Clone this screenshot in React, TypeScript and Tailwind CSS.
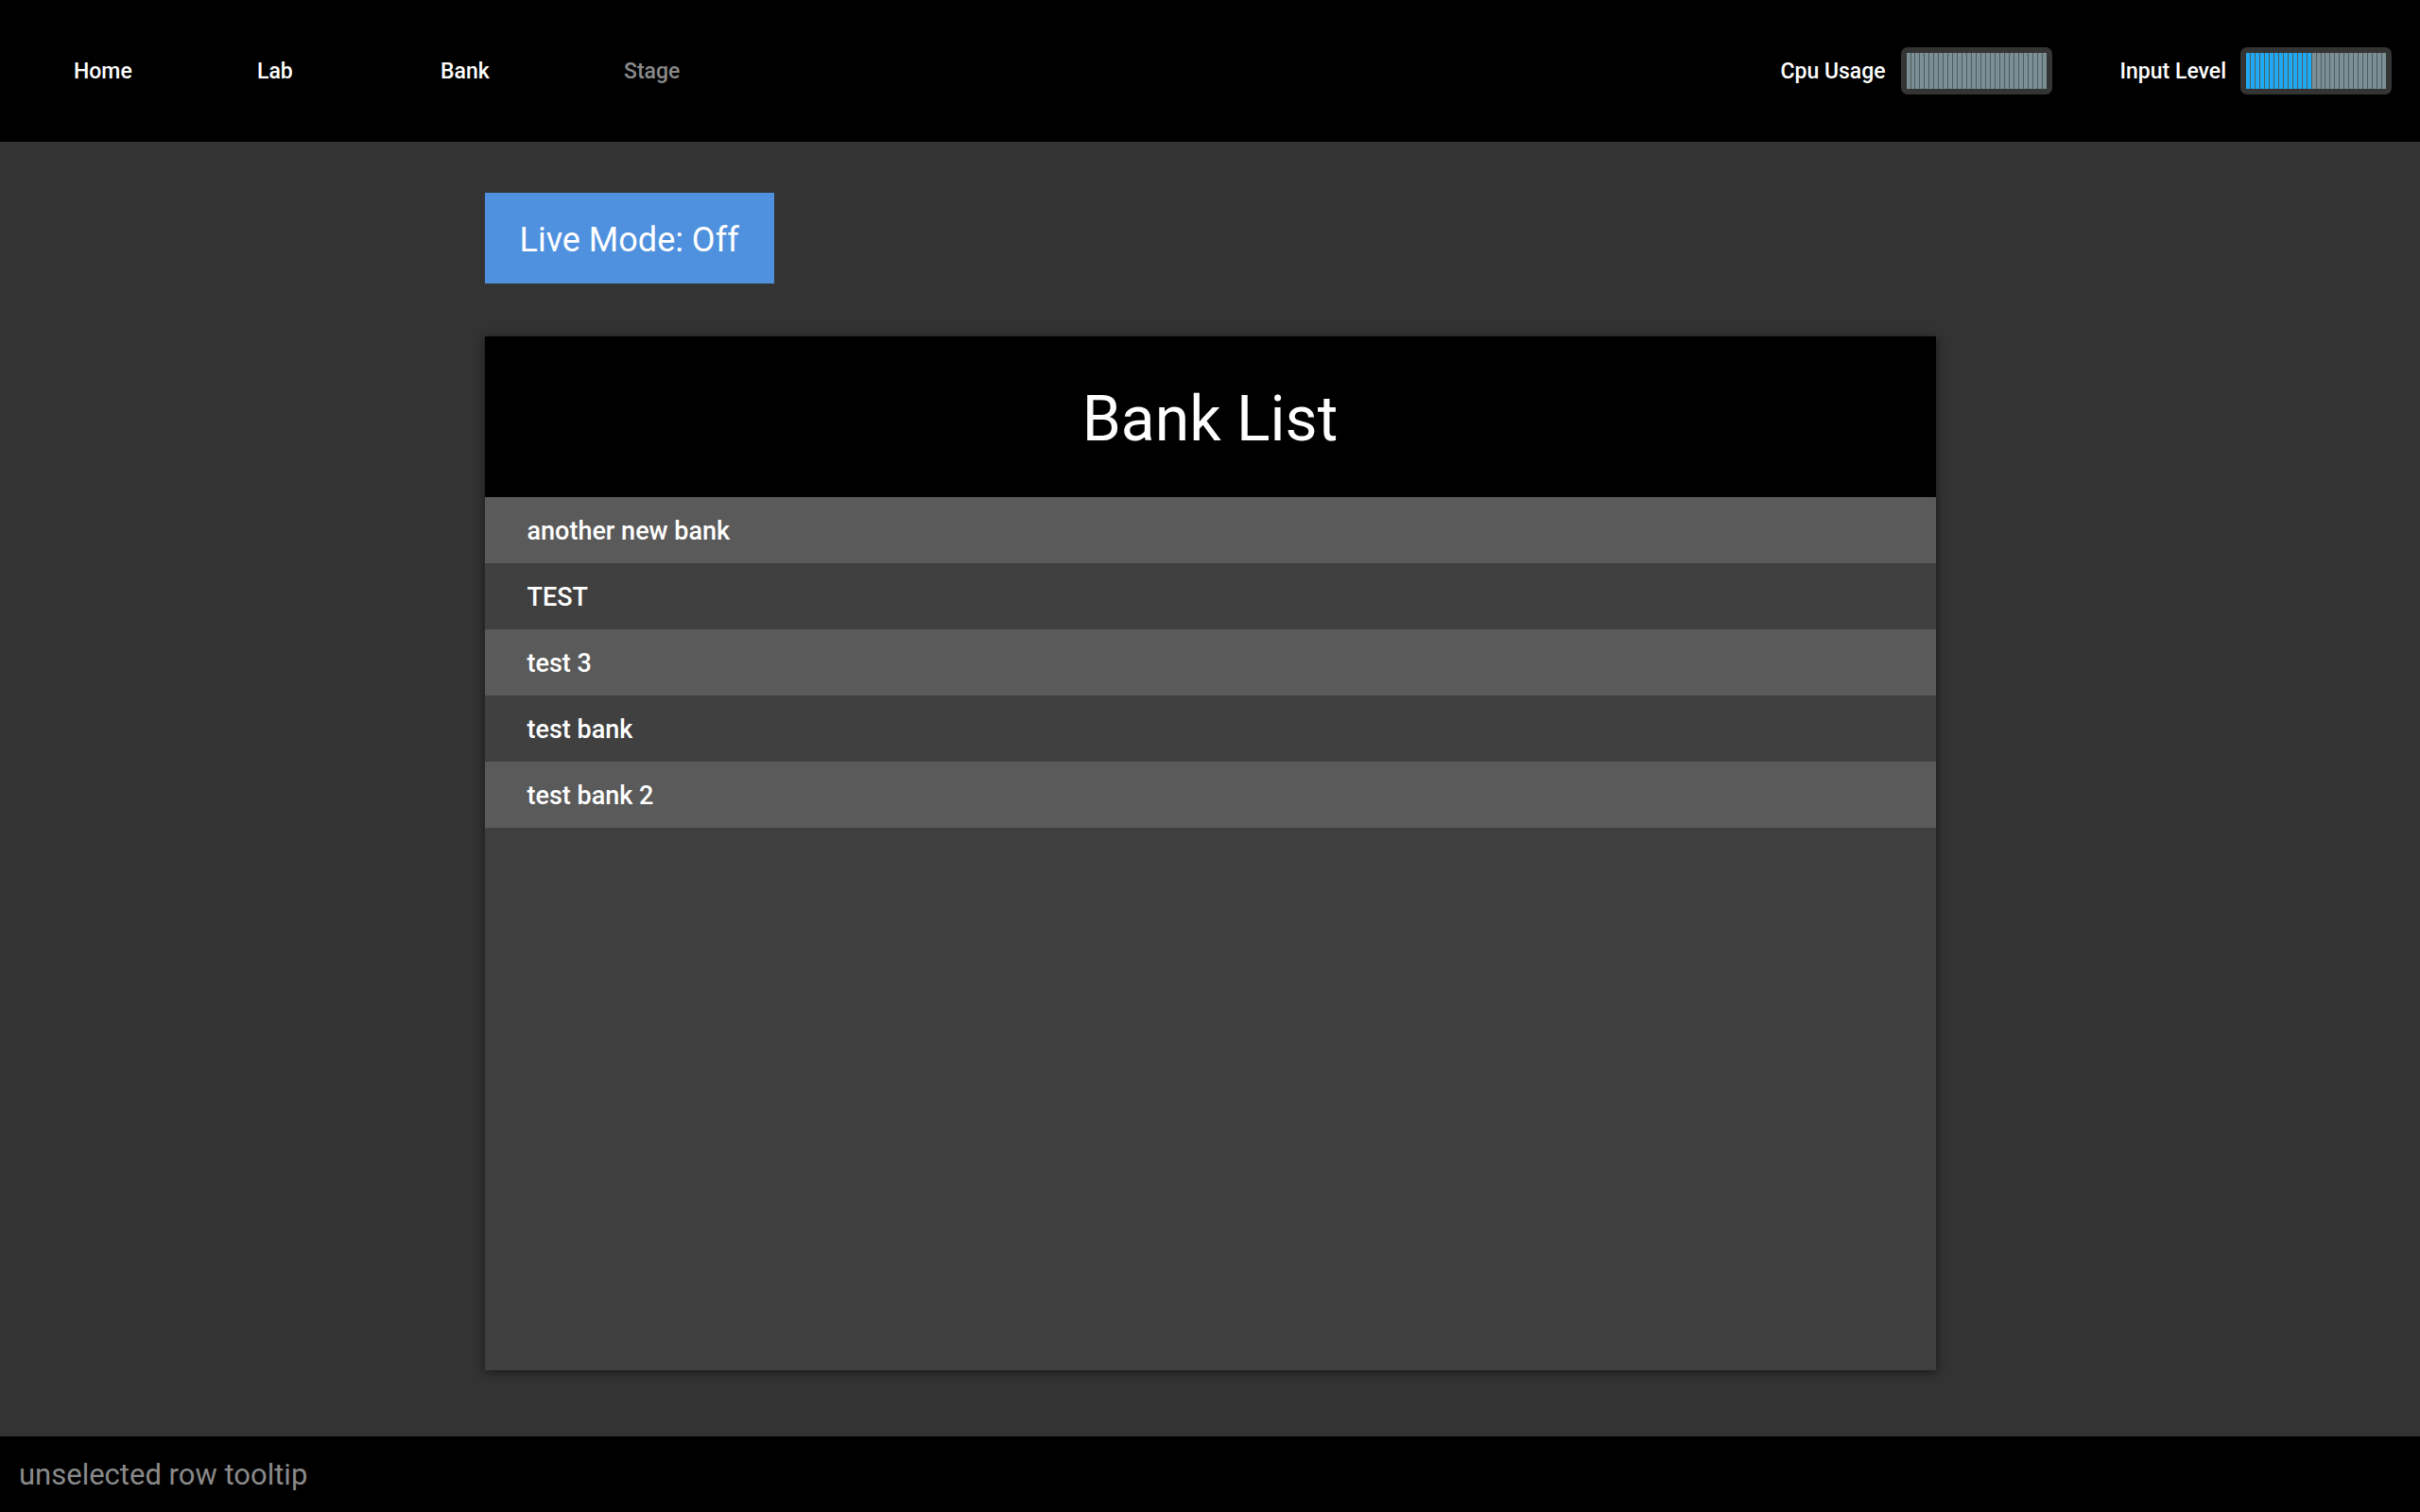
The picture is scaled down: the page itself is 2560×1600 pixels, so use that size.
const navItems = [
  { label: 'Home', active: true },
  { label: 'Lab', active: true },
  { label: 'Bank', active: true },
  { label: 'Stage', active: false },
];

const banks = ['another new bank', 'TEST', 'test 3', 'test bank', 'test bank 2'];

function Meter({ level }: { level: number }) {
  const stripes = Array.from({ length: 30 }, (_, i) => i);
  return (
    <div className="w-[160px] h-[50px] rounded-[7px] bg-[#343434] p-[6px]">
      <div className="flex h-full gap-[1px] bg-[#4d5b60]">
        {stripes.map((i) => (
          <div key={i} className={`flex-1 ${i < level ? 'bg-[#1fa9f2]' : 'bg-[#7b8f95]'}`} />
        ))}
      </div>
    </div>
  );
}

export default function App() {
  return (
    <div className="min-h-screen flex flex-col bg-[#333333] text-white font-['Roboto','Liberation_Sans',sans-serif]">
      <header className="h-[150px] bg-black flex items-center justify-between pl-[78px] pr-[30px]">
        <nav className="flex items-center pt-[3px]">
          {navItems.map((item) => (
            <span
              key={item.label}
              className={`w-[194px] text-[23px] font-medium ${item.active ? 'text-white' : 'text-[#8a8a8a]'}`}
            >
              {item.label}
            </span>
          ))}
        </nav>
        <div className="flex items-center">
          <span className="text-[23px] font-medium mr-[16px] pt-[3px]">Cpu Usage</span>
          <Meter level={0} />
          <span className="text-[23px] font-medium ml-[72px] mr-[15px] pt-[3px]">Input Level</span>
          <Meter level={14} />
        </div>
      </header>

      <main className="flex-1 flex flex-col">
        <div className="w-[1535px] mx-auto pt-[54px] pb-[70px] flex flex-col flex-1">
          <button className="self-start h-[96px] px-[37px] pt-[4px] bg-[#4f91de] text-[36px] text-white">
            Live Mode: Off
          </button>
          <div className="mt-[56px] flex-1 flex flex-col bg-[#3f3f3f] shadow-[0_2px_10px_rgba(0,0,0,0.55)]">
            <div className="h-[170px] bg-black flex items-center justify-center pt-[4px]">
              <h1 className="text-[66px]">Bank List</h1>
            </div>
            {banks.map((name, i) => (
              <div
                key={name}
                className={`h-[70px] flex items-center pl-[45px] pt-[2px] text-[27px] font-medium ${i % 2 === 0 ? 'bg-[#5a5a5a]' : 'bg-[#404040]'}`}
              >
                {name}
              </div>
            ))}
          </div>
        </div>
      </main>

      <footer className="h-[80px] bg-black flex items-center pl-[20px] pt-[2px]">
        <span className="text-[31px] text-[#8a8a8a]">unselected row tooltip</span>
      </footer>
    </div>
  );
}
